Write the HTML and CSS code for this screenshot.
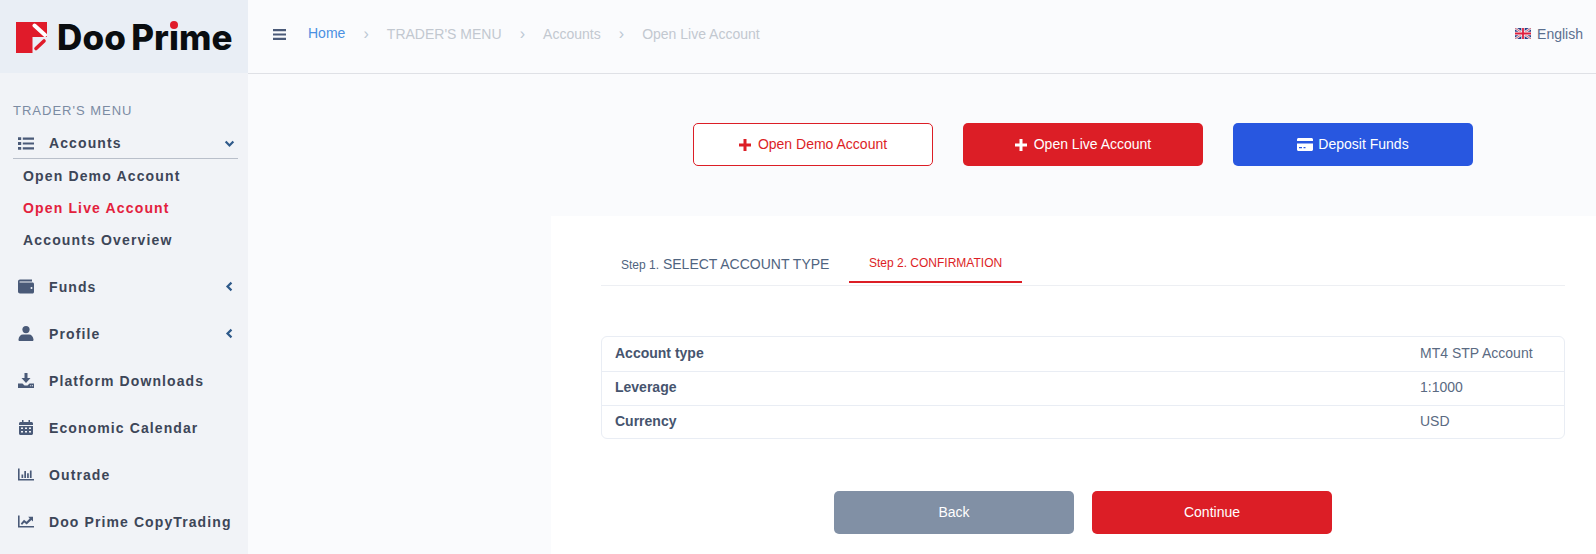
FILE: index.html
```html
<!DOCTYPE html>
<html lang="en">
<head>
<meta charset="utf-8">
<title>Open Live Account</title>
<link rel="stylesheet" href="styles.css">
</head>
<body>
<div class="app">
  <aside class="sidebar">
    <div class="brand">
      <svg class="brand-mark" viewBox="0 0 31 31" width="31" height="31">
        <path d="M0 0H31V15H16.500V31H0Z" fill="#e01b2a"/>
        <path d="M18.500 3.500L29 13" stroke="#fff" stroke-width="4" stroke-linecap="round"/>
        <path d="M20 26.500L28 19" stroke="#e01b2a" stroke-width="3.600" stroke-linecap="round"/>
      </svg>
      <span class="brand-name">Doo Pr<span class="brand-i">i</span>me</span>
    </div>
    <nav class="menu">
      <div class="menu-title">TRADER'S MENU</div>
      <div class="menu-item menu-open">
        <svg class="mi" viewBox="0 0 16 14"><path d="M0 .8h3.200v2.800H0zM0 5.600h3.200v2.800H0zM0 10.400h3.200v2.800H0zM4.800 1.100H16v2.200H4.800zM4.800 5.900H16v2.200H4.800zM4.800 10.700H16v2.200H4.800z"/></svg>
        <span class="mt">Accounts</span>
        <svg class="chev" viewBox="0 0 10 10"><path d="M1.500 3.200L5 6.800L8.500 3.200" /></svg>
      </div>
      <ul class="submenu">
        <li>Open Demo Account</li>
        <li class="current">Open Live Account</li>
        <li>Accounts Overview</li>
      </ul>
      <div class="menu-item">
        <svg class="mi" viewBox="0 0 16 14"><path d="M2 0H14V2H2C1 2 1 3 2 3H14.500C15.300 3 16 3.700 16 4.500V12.500C16 13.300 15.300 14 14.500 14H2C.9 14 0 13.100 0 12V2C0 .9.900 0 2 0ZM13.500 7.500a1 1 0 1 0 0 2a1 1 0 0 0 0-2Z" fill-rule="evenodd"/></svg>
        <span class="mt">Funds</span>
        <svg class="chev" viewBox="0 0 10 10"><path d="M6.800 1.500L3.200 5L6.800 8.500"/></svg>
      </div>
      <div class="menu-item">
        <svg class="mi" viewBox="0 0 16 15"><circle cx="8" cy="3.600" r="3.600"/><path d="M1.500 15C.7 15 .4 14.300.5 13.500C.8 10.500 2.500 8.500 5 8.500H11C13.500 8.500 15.200 10.500 15.500 13.500C15.600 14.300 15.300 15 14.500 15Z"/></svg>
        <span class="mt">Profile</span>
        <svg class="chev" viewBox="0 0 10 10"><path d="M6.800 1.500L3.200 5L6.800 8.500"/></svg>
      </div>
      <div class="menu-item">
        <svg class="mi" viewBox="0 0 16 15"><path d="M6.500 0H9.500V5H12.500L8 10L3.500 5H6.500ZM0 10.500H4.500L6.500 12.500H9.500L11.500 10.500H16V15H0ZM12.200 12.200v1h1v-1ZM14 12.200v1h1v-1Z" fill-rule="evenodd"/></svg>
        <span class="mt">Platform Downloads</span>
      </div>
      <div class="menu-item">
        <svg class="mi" viewBox="0 0 14 15"><path d="M3 0H4.500V2H9.500V0H11V2H12.500C13.300 2 14 2.700 14 3.500V5H0V3.500C0 2.700.7 2 1.500 2H3ZM0 6H14V13.500C14 14.300 13.300 15 12.500 15H1.500C.7 15 0 14.300 0 13.500ZM2 7.500V9H4V7.500ZM6 7.500V9H8V7.500ZM10 7.500V9H12V7.500ZM2 11V12.500H4V11ZM6 11V12.500H8V11ZM10 11V12.500H12V11Z" fill-rule="evenodd"/></svg>
        <span class="mt">Economic Calendar</span>
      </div>
      <div class="menu-item">
        <svg class="mi" viewBox="0 0 16 12"><path d="M0 0H1.600V10.400H16V12H0ZM3.500 6H5.200V9.400H3.500ZM6.300 2.500H8V9.400H6.300ZM9.100 4.800H10.800V9.400H9.100ZM11.900 2H13.600V9.400H11.900Z"/></svg>
        <span class="mt">Outrade</span>
      </div>
      <div class="menu-item">
        <svg class="mi" viewBox="0 0 16 12"><path d="M0 0H1.600V10.400H16V12H0ZM2.800 8L6 4.300L8.500 6.200L11.700 3L10.200 1.200H15V6L13.400 4.500L8.700 9L6.200 7.100L4 9.500Z"/></svg>
        <span class="mt">Doo Prime CopyTrading</span>
      </div>
    </nav>
  </aside>
  <main class="main">
    <header class="topbar">
      <svg class="burger" viewBox="0 0 12 10"><path d="M0 0H12V2H0ZM0 4H12V6H0ZM0 8H12V10H0Z"/></svg>
      <ol class="crumbs">
        <li class="home">Home</li>
        <li>TRADER'S MENU</li>
        <li>Accounts</li>
        <li>Open Live Account</li>
      </ol>
      <div class="lang">
        <svg class="flag" viewBox="0 0 16 11">
          <rect width="16" height="11" fill="#2b3f86"/>
          <path d="M0 0L16 11M16 0L0 11" stroke="#e6e8ef" stroke-width="2.400"/>
          <path d="M0 0L16 11M16 0L0 11" stroke="#c9304a" stroke-width=".7"/>
          <path d="M8 0V11M0 5.500H16" stroke="#f2f3f6" stroke-width="3.400"/>
          <path d="M8 0V11M0 5.500H16" stroke="#e0203f" stroke-width="1.800"/>
        </svg>
        <span>English</span>
      </div>
    </header>
    <div class="actions">
      <a class="btn btn-outline"><svg class="plus" viewBox="0 0 12 12"><path d="M4.500 0H7.500V4.500H12V7.500H7.500V12H4.500V7.500H0V4.500H4.500Z"/></svg>Open Demo Account</a>
      <a class="btn btn-red"><svg class="plus" viewBox="0 0 12 12"><path d="M4.500 0H7.500V4.500H12V7.500H7.500V12H4.500V7.500H0V4.500H4.500Z"/></svg>Open Live Account</a>
      <a class="btn btn-blue"><svg class="card" viewBox="0 0 16 13"><path d="M1.500 0H14.500C15.300 0 16 .7 16 1.500V3H0V1.500C0 .7.700 0 1.500 0ZM0 5.500H16V11.500C16 12.300 15.300 13 14.500 13H1.500C.7 13 0 12.300 0 11.500ZM2 9V10.300H5V9ZM6.500 9V10.300H8.500V9Z" fill-rule="evenodd"/></svg>Deposit Funds</a>
    </div>
    <section class="panel">
      <div class="tabs">
        <div class="tab"><small>Step 1.</small> SELECT ACCOUNT TYPE</div>
        <div class="tab tab-active">Step 2. CONFIRMATION</div>
      </div>
      <div class="summary">
        <div class="row"><b>Account type</b><span>MT4 STP Account</span></div>
        <div class="row"><b>Leverage</b><span>1:1000</span></div>
        <div class="row"><b>Currency</b><span>USD</span></div>
      </div>
      <div class="footer-actions">
        <a class="btn btn-grey">Back</a>
        <a class="btn btn-red">Continue</a>
      </div>
    </section>
  </main>
</div>
</body>
</html>
```
FILE: styles.css
```css
* { box-sizing: border-box; }
html, body { margin: 0; height: 100%; overflow: hidden; }
body { font-family: "Liberation Sans", Arial, sans-serif; color: #4a5568; background: #fafbfd; }
.app { display: flex; height: 554px; }

.sidebar { width: 248px; flex: none; background: #f1f3f7; }
.brand { height: 73px; background: #e9eef5; display: flex; align-items: center; padding: 0 0 0 16px; }
.brand-mark { flex: none; margin: 2px 10px 0 0; }
.brand-name { font-family: Inter, "Liberation Sans", sans-serif; font-weight: 800; font-size: 35px; letter-spacing: .1px; word-spacing: -2.5px; color: #0a0d10; white-space: nowrap; }
.brand-i { position: relative; }
.brand-i::after { content: ""; position: absolute; left: 50%; top: 5px; width: 8px; height: 8px; margin-left: -4px; border-radius: 50%; background: #e01b2a; box-shadow: 0 0 0 1px #e9eef5; }

.menu { padding: 30px 10px 0 13px; }
.menu-title { font-size: 13px; line-height: 16px; letter-spacing: 1px; color: #7b8ba3; margin-bottom: 13px; }
.menu-item { display: flex; align-items: center; height: 47px; padding-left: 5px; color: #3d4658; }
.menu-open { height: 27px; border-bottom: 1px solid #b9bfca; padding-bottom: 4px; }
.mi { width: 16px; height: 15px; flex: none; fill: #4a5a78; margin-right: 15px; }
.mt { flex: 1; font-size: 14px; font-weight: 700; letter-spacing: 1.1px; white-space: nowrap; }
.chev { width: 11px; height: 11px; flex: none; margin-right: 3px; fill: none; stroke: #2f5a8a; stroke-width: 2; }
.submenu { list-style: none; margin: 0 0 7px; padding: 1px 0 0 10px; }
.submenu li { height: 32px; line-height: 32px; font-size: 14px; font-weight: 700; letter-spacing: 1.15px; color: #3d4658; white-space: nowrap; }
.submenu .current { color: #e3213d; }

.main { flex: 1; min-width: 0; display: flex; flex-direction: column; }
.topbar { height: 74px; flex: none; border-bottom: 1px solid #dfe1e6; display: flex; align-items: center; padding: 0 13px 6px 25px; font-size: 14px; }
.burger { width: 13px; height: 11px; fill: #4a5a78; flex: none; margin-right: 22px; margin-top: 2px; }
.crumbs { list-style: none; display: flex; margin: 0; padding: 0; color: #c2c8d0; flex: 1; }
.crumbs li { white-space: nowrap; }
.crumbs li + li::before { content: "\203A"; display: inline-block; width: 41.5px; text-align: center; font-size: 16px; color: #bcc8d4; }
.crumbs .home { color: #4a90e2; }
.lang { display: flex; align-items: center; color: #5a6f8f; font-size: 14px; }
.flag { width: 16px; height: 11px; margin-right: 6px; }

.actions { display: flex; gap: 30px; padding: 49px 0 50px 445px; flex: none; }
.btn { display: flex; align-items: center; justify-content: center; width: 240px; height: 43px; padding-bottom: 2px; border-radius: 5px; font-size: 14px; text-decoration: none; color: #fff; }
.btn-outline { background: #fff; border: 1px solid #dc1e26; color: #dc1e26; }
.btn-red { background: #dc1e26; }
.btn-blue { background: #2857e0; }
.btn-grey { background: #8190a5; }
.plus { width: 12px; height: 12px; fill: currentColor; margin: 2px 7px 0 0; }
.card { width: 16px; height: 13px; fill: currentColor; margin: 2px 5px 0 0; }

.panel { flex: 1; margin-left: 303px; background: #fff; padding: 25px 31px 0 50px; }
.tabs { display: flex; border-bottom: 1px solid #edeff3; height: 45px; }
.tab { width: 248px; padding: 15px 0 0 20px; font-size: 14px; color: #4f6480; white-space: nowrap; }
.tab small { font-size: 12px; }
.tab-active { width: 173px; height: 42px; padding: 15px 0 0 20px; font-size: 12px; color: #dc1e26; border-bottom: 2px solid #dc1e26; }

.summary { margin-top: 50px; border: 1px solid #e9edf4; border-radius: 6px; }
.row { display: flex; height: 33.8px; align-items: center; padding: 0 0 2px 13px; font-size: 14px; }
.row + .row { border-top: 1px solid #e9edf4; }
.row b { width: 805px; color: #46546e; }
.row span { color: #5a6a82; }

.footer-actions { display: flex; gap: 18px; margin-top: 52px; padding-left: 233px; }
```
